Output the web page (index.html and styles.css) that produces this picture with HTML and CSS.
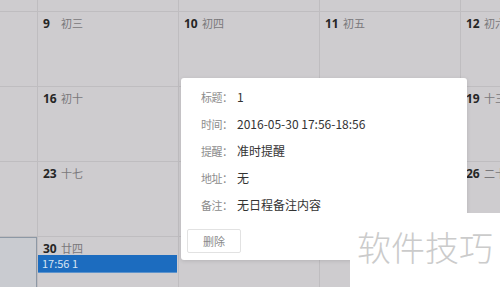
FILE: index.html
```html
<!DOCTYPE html>
<html lang="zh-CN">
<head>
    <meta charset="UTF-8">
    <title>日程</title>
    <link rel="stylesheet" href="styles.css">
</head>
<body>
<div class="page">
    <div class="calendar">
        <div class="day"><span class="num">1</span><span class="lunar">廿五</span></div>
        <div class="day"><span class="num">2</span><span class="lunar">廿六</span></div>
        <div class="day"><span class="num">3</span><span class="lunar">廿七</span></div>
        <div class="day"><span class="num">4</span><span class="lunar">廿八</span></div>
        <div class="day"><span class="num">5</span><span class="lunar">廿九</span></div>

        <div class="day"><span class="num">8</span><span class="lunar">初二</span></div>
        <div class="day"><span class="num">9</span><span class="lunar">初三</span></div>
        <div class="day"><span class="num">10</span><span class="lunar">初四</span></div>
        <div class="day"><span class="num">11</span><span class="lunar">初五</span></div>
        <div class="day"><span class="num">12</span><span class="lunar">初六</span></div>

        <div class="day"><span class="num">15</span><span class="lunar">初九</span></div>
        <div class="day"><span class="num">16</span><span class="lunar">初十</span></div>
        <div class="day"><span class="num">17</span><span class="lunar">十一</span></div>
        <div class="day"><span class="num">18</span><span class="lunar">十二</span></div>
        <div class="day"><span class="num">19</span><span class="lunar">十三</span></div>

        <div class="day"><span class="num">22</span><span class="lunar">十六</span></div>
        <div class="day"><span class="num">23</span><span class="lunar">十七</span></div>
        <div class="day"><span class="num">24</span><span class="lunar">十八</span></div>
        <div class="day"><span class="num">25</span><span class="lunar">十九</span></div>
        <div class="day"><span class="num">26</span><span class="lunar">二十</span></div>

        <div class="day selected"></div>
        <div class="day">
            <span class="num">30</span><span class="lunar">廿四</span>
            <div class="event">17:56 1</div>
        </div>
        <div class="day"></div>
        <div class="day"></div>
        <div class="day"></div>
    </div>

    <div class="popup">
        <div class="row"><span class="label">标题：</span><span class="value">1</span></div>
        <div class="row"><span class="label">时间：</span><span class="value">2016-05-30 17:56-18:56</span></div>
        <div class="row"><span class="label">提醒：</span><span class="value">准时提醒</span></div>
        <div class="row"><span class="label">地址：</span><span class="value">无</span></div>
        <div class="row"><span class="label">备注：</span><span class="value">无日程备注内容</span></div>
        <button class="btn-delete">删除</button>
    </div>

    <div class="watermark">软件技巧</div>
</div>
</body>
</html>
```

FILE: styles.css
```css
body {
    margin: 0;
    background-color: #cecccf;
    font-family: "Noto Sans CJK SC", "DejaVu Sans", sans-serif;
}

.page {
    position: relative;
    width: 500px;
    height: 287px;
    overflow: hidden;
}

.calendar {
    display: grid;
    grid-template-columns: repeat(5, 140px);
    grid-auto-rows: 74px;
    gap: 1px;
    background-color: #bfbdc0;
    margin-top: -63px;
    margin-left: -103px;
    width: 705px;
}

.day {
    background-color: #cecccf;
    padding: 4px 0 0 5px;
    display: flex;
    flex-wrap: wrap;
    align-content: flex-start;
    align-items: baseline;
}

.day.selected {
    background-color: #c9cbd0;
    box-shadow: inset -1px 1px 0 #8d98a5;
}

.num {
    min-width: 14px;
    margin-right: 4px;
    font-family: "Open Sans", "DejaVu Sans", sans-serif;
    font-weight: bold;
    font-size: 12px;
    line-height: 15px;
    color: #262626;
}

.lunar {
    font-size: 11px;
    line-height: 15px;
    color: #7a787b;
}

.event {
    flex-basis: 100%;
    margin: -1px 0 0 -5px;
    height: 17px;
    line-height: 17px;
    padding-left: 4px;
    background-color: #1c6cbf;
    border-bottom: 1px solid #5d93cc;
    color: #d6e4f3;
    font-size: 11px;
}

.popup {
    position: absolute;
    left: 181px;
    top: 78px;
    width: 286px;
    height: 182px;
    box-sizing: border-box;
    padding: 5px 6px 0;
    background-color: #fff;
    border-radius: 3px;
    box-shadow: 0 1px 4px rgba(0, 0, 0, 0.12);
    font-size: 12px;
}

.row {
    display: flex;
    align-items: center;
    height: 27px;
    line-height: 16px;
    padding-left: 14px;
}

.label {
    width: 33px;
    margin-right: 3px;
    flex-shrink: 0;
    font-size: 11px;
    letter-spacing: -0.5px;
    color: #8c8c8c;
}

.value {
    color: #333;
}

.btn-delete {
    display: block;
    margin-top: 11px;
    width: 54px;
    height: 24px;
    background-color: #fff;
    border: 1px solid #e2e2e2;
    border-radius: 2px;
    color: #8a8a8a;
    font-family: inherit;
    font-size: 11px;
}

.watermark {
    position: absolute;
    left: 350px;
    top: 213px;
    width: 150px;
    height: 74px;
    background-color: #fff;
    padding-left: 7px;
    box-sizing: border-box;
    color: #cbcbcb;
    font-size: 34px;
    font-weight: 300;
    line-height: 68px;
    white-space: nowrap;
}
```
